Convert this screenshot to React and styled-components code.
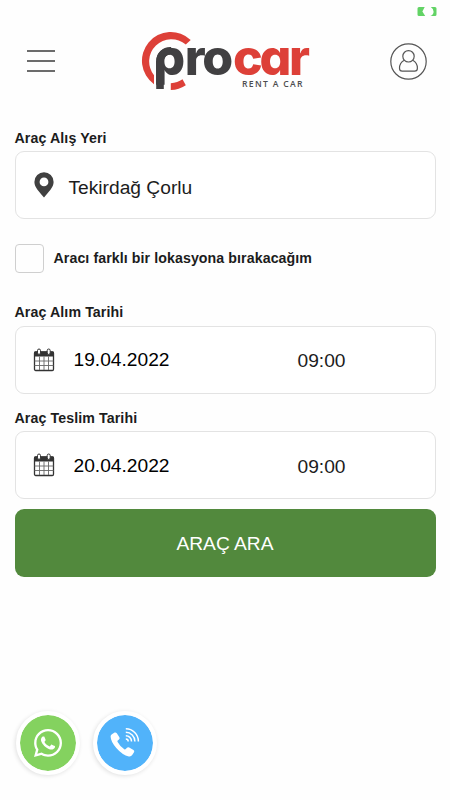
import { FaWhatsapp } from 'react-icons/fa';
import styled, { createGlobalStyle } from 'styled-components';

const GlobalStyle = createGlobalStyle`
  * {
    box-sizing: border-box;
  }

  body {
    margin: 0;
    background: #fefefe;
    font-family: 'Liberation Sans', Arial, sans-serif;
    color: #1c1c1c;
  }

  button {
    padding: 0;
    border: 0;
    background: none;
    font-family: inherit;
  }
`;

const Screen = styled.div`
  display: flex;
  flex-direction: column;
  height: 800px;
  overflow: hidden;
`;

const StatusBar = styled.div`
  display: flex;
  justify-content: flex-end;
  height: 23px;
  padding: 7px 13.5px 0 0;
`;

const Header = styled.header`
  display: flex;
  align-items: center;
  justify-content: space-between;
  height: 76px;
  padding: 0 23px 0 26px;
`;

const MenuButton = styled.button`
  display: flex;
  flex-direction: column;
  gap: 8px;
  width: 30px;
  padding: 0 1px;

  span {
    height: 2px;
    background: #6c6c6c;
  }
`;

const LogoLink = styled.a`
  display: block;
  height: 76px;
  margin-left: 3px;
`;

const LogoText = styled.text`
  font-family: Inter, Lato, sans-serif;
  font-size: 50px;
  font-weight: 800;
  font-feature-settings: 'cv11';
`;

const LogoTagline = styled.text`
  font-family: 'Open Sans', sans-serif;
  font-size: 8.6px;
  font-weight: 600;
`;

const UserButton = styled.button`
  display: flex;
  width: 37px;
  height: 37px;
`;

const Form = styled.form`
  display: flex;
  flex-direction: column;
  padding: 30px 14.5px 0;
`;

const Label = styled.label`
  height: 22.3px;
  margin-top: ${(props) => props.$top || 0}px;
  font-size: 14.2px;
  font-weight: 700;
  letter-spacing: 0.1px;
  line-height: 18px;
`;

const Field = styled.div`
  display: flex;
  align-items: center;
  height: 68px;
  padding-left: ${(props) => props.$left || 17}px;
  border: 1.4px solid #e3e3e3;
  border-radius: 9px;
  background: #fff;
  font-size: 19.2px;
`;

const Place = styled.span`
  padding-top: 5px;
  margin-left: 14.5px;
`;

const DateText = styled.span`
  width: 224px;
  padding-top: 1.5px;
  margin-left: 19px;
  color: #000;
`;

const TimeText = styled.span`
  padding-top: 3.5px;
`;

const CheckRow = styled.label`
  display: flex;
  align-items: center;
  gap: 10px;
  height: 29px;
  margin-top: 25px;
  font-size: 14.2px;
  font-weight: 700;
  letter-spacing: 0.08px;
`;

const CheckBox = styled.span`
  width: 29px;
  height: 29px;
  border: 1.4px solid #cfcfcf;
  border-radius: 4px;
`;

const CheckText = styled.span`
  padding-bottom: 2.5px;
`;

const SearchButton = styled.button`
  height: 68px;
  padding-top: 1px;
  margin-top: 10px;
  border-radius: 9px;
  background: #52893d;
  color: #fff;
  font-size: 19.2px;
`;

const ContactBar = styled.div`
  display: flex;
  gap: 13px;
  margin-top: auto;
  padding: 0 0 25.5px 16px;
`;

const ContactButton = styled.a`
  display: flex;
  align-items: center;
  justify-content: center;
  width: 64px;
  height: 64px;
  border: 4px solid #fff;
  border-radius: 50%;
  background: ${(props) => props.$color};
  background-clip: padding-box;
  box-shadow: -1px 1px 4px rgba(0, 0, 0, 0.12);
  color: #fff;
`;

function Battery() {
  return (
    <svg width="20" height="9" viewBox="0 0 20 9" fill="#62d365">
      <path d="M2 0h5.7L5.4 4.5 8.2 9H2Q.5 9 .5 7.5v-6Q.5 0 2 0z" />
      <path d="M13.8 0H18q1.5 0 1.5 1.5v6Q19.5 9 18 9h-4.6q3.2-1.5 3.2-4.3T13.8 0z" />
    </svg>
  );
}

function Logo() {
  return (
    <svg width="180" height="76" viewBox="135 23 180 76">
      <LogoText y="75" x="153.3 184.8 202.3 233 259.5 289" fill="#414042">
        pro<tspan fill="#dd4038">car</tspan>
      </LogoText>
      {/* rounds off the shoulder of the first letter so it follows the ring */}
      <path d="M154 44H171V47A14.2 14.2 0 0 0 156.2 61H154z" fill="#fefefe" />
      <path d="M160 62A10.4 10.4 0 0 1 171 50.8" fill="none" stroke="#414042" strokeWidth="7.6" />
      <rect x="156.2" y="62" width="7.6" height="27" fill="#414042" />
      <path
        d="M190.7 40A28.8 28.8 0 1 0 154 84.2V75.2A22.2 22.2 0 0 1 185.8 44.5z"
        fill="#dd4038"
      />
      <path d="M170.8 83.2Q177.5 82.8 182.5 79.2L185.8 85.2Q179 89.8 170.8 90z" fill="#dd4038" />
      <LogoTagline x="242" y="87.3" textLength="60.5" fill="#4d4d4f">
        RENT A CAR
      </LogoTagline>
    </svg>
  );
}

function UserIcon() {
  return (
    <svg width="37" height="37" viewBox="0 0 37 37" fill="none" stroke="#555" strokeWidth="1.2">
      <circle cx="18.5" cy="18.5" r="17.7" />
      <circle cx="18.5" cy="13.3" r="5.7" />
      <path d="M14.3 17.2c-3.2 1.6-4.8 4.3-4.8 8 0 1.9.9 3 2.7 3h12.4c1.9 0 2.8-1.1 2.8-3 0-3.7-1.6-6.4-4.7-8" />
    </svg>
  );
}

function PinIcon() {
  return (
    <svg width="20" height="26" viewBox="0 0 20 26">
      <path
        d="M10 .3A9.6 9.6 0 0 0 .4 9.9C.4 15.5 5.5 19.5 10 25.6c4.5-6.1 9.6-10.1 9.6-15.7A9.6 9.6 0 0 0 10 .3zm0 5.2a4.4 4.4 0 1 1 0 8.8 4.4 4.4 0 0 1 0-8.8z"
        fill="#404040"
      />
    </svg>
  );
}

function CalendarIcon() {
  return (
    <svg width="22" height="24" viewBox="0 0 22 24">
      <rect x="1.5" y="4" width="19" height="18.5" rx="1.2" fill="#fff" stroke="#333" strokeWidth="1.3" />
      <path d="M1 8.5V4.7q0-1.2 1.2-1.2h17.6q1.2 0 1.2 1.2v3.8z" fill="#333" />
      <path
        d="M6.5 8.5V22M11 8.5V22M15.5 8.5V22M1.5 13h19M1.5 17.5h19"
        stroke="#666"
        strokeWidth=".9"
      />
      <rect x="4.5" y="1" width="3" height="5.4" rx="1.5" fill="#fff" stroke="#333" />
      <rect x="14.2" y="1" width="3" height="5.4" rx="1.5" fill="#fff" stroke="#333" />
    </svg>
  );
}

function CallIcon() {
  return (
    <svg width="30" height="30" viewBox="0 0 30 30">
      <path
        d="M1.9 6.2 4.6 4.6q1.3-.6 2.2.6l2.6 4q.7 1.3-.4 2.2l-1.3 1.1q-.6.6-.1 1.5 2.4 4.4 6.7 7.3.8.5 1.5-.2l1.2-1.3q.9-.9 2.2-.2l4.3 2.5q1.3.9.5 2.2l-1.8 2.8q-1.2 1.7-3.4 1.3Q12.5 27 6.3 19.9.9 14 .6 8.8.5 7.1 1.9 6.2z"
        fill="#fff"
      />
      <g fill="none" stroke="#fff" strokeWidth="1.5">
        <path d="M15.8 .8a12.6 12.6 0 0 1 12.6 12.6" />
        <path d="M15.8 4.3a9.1 9.1 0 0 1 9.1 9.1" />
        <path d="M15.8 7.7a5.7 5.7 0 0 1 5.7 5.7" />
        <path d="M15.8 11a2.4 2.4 0 0 1 2.4 2.4" />
      </g>
    </svg>
  );
}

function DateField({ date, time }) {
  return (
    <Field>
      <CalendarIcon />
      <DateText>{date}</DateText>
      <TimeText>{time}</TimeText>
    </Field>
  );
}

function App() {
  return (
    <Screen>
      <GlobalStyle />
      <StatusBar>
        <Battery />
      </StatusBar>
      <Header>
        <MenuButton>
          <span />
          <span />
          <span />
        </MenuButton>
        <LogoLink>
          <Logo />
        </LogoLink>
        <UserButton>
          <UserIcon />
        </UserButton>
      </Header>

      <Form>
        <Label>Araç Alış Yeri</Label>
        <Field $left={18.5}>
          <PinIcon />
          <Place>Tekirdağ Çorlu</Place>
        </Field>

        <CheckRow>
          <CheckBox />
          <CheckText>Aracı farklı bir lokasyona bırakacağım</CheckText>
        </CheckRow>

        <Label $top={30}>Araç Alım Tarihi</Label>
        <DateField date="19.04.2022" time="09:00" />

        <Label $top={15.4}>Araç Teslim Tarihi</Label>
        <DateField date="20.04.2022" time="09:00" />

        <SearchButton type="button">ARAÇ ARA</SearchButton>
      </Form>

      <ContactBar>
        <ContactButton $color="#84d25f">
          <FaWhatsapp size={32} />
        </ContactButton>
        <ContactButton $color="#51b3fa">
          <CallIcon />
        </ContactButton>
      </ContactBar>
    </Screen>
  );
}

export default App;
